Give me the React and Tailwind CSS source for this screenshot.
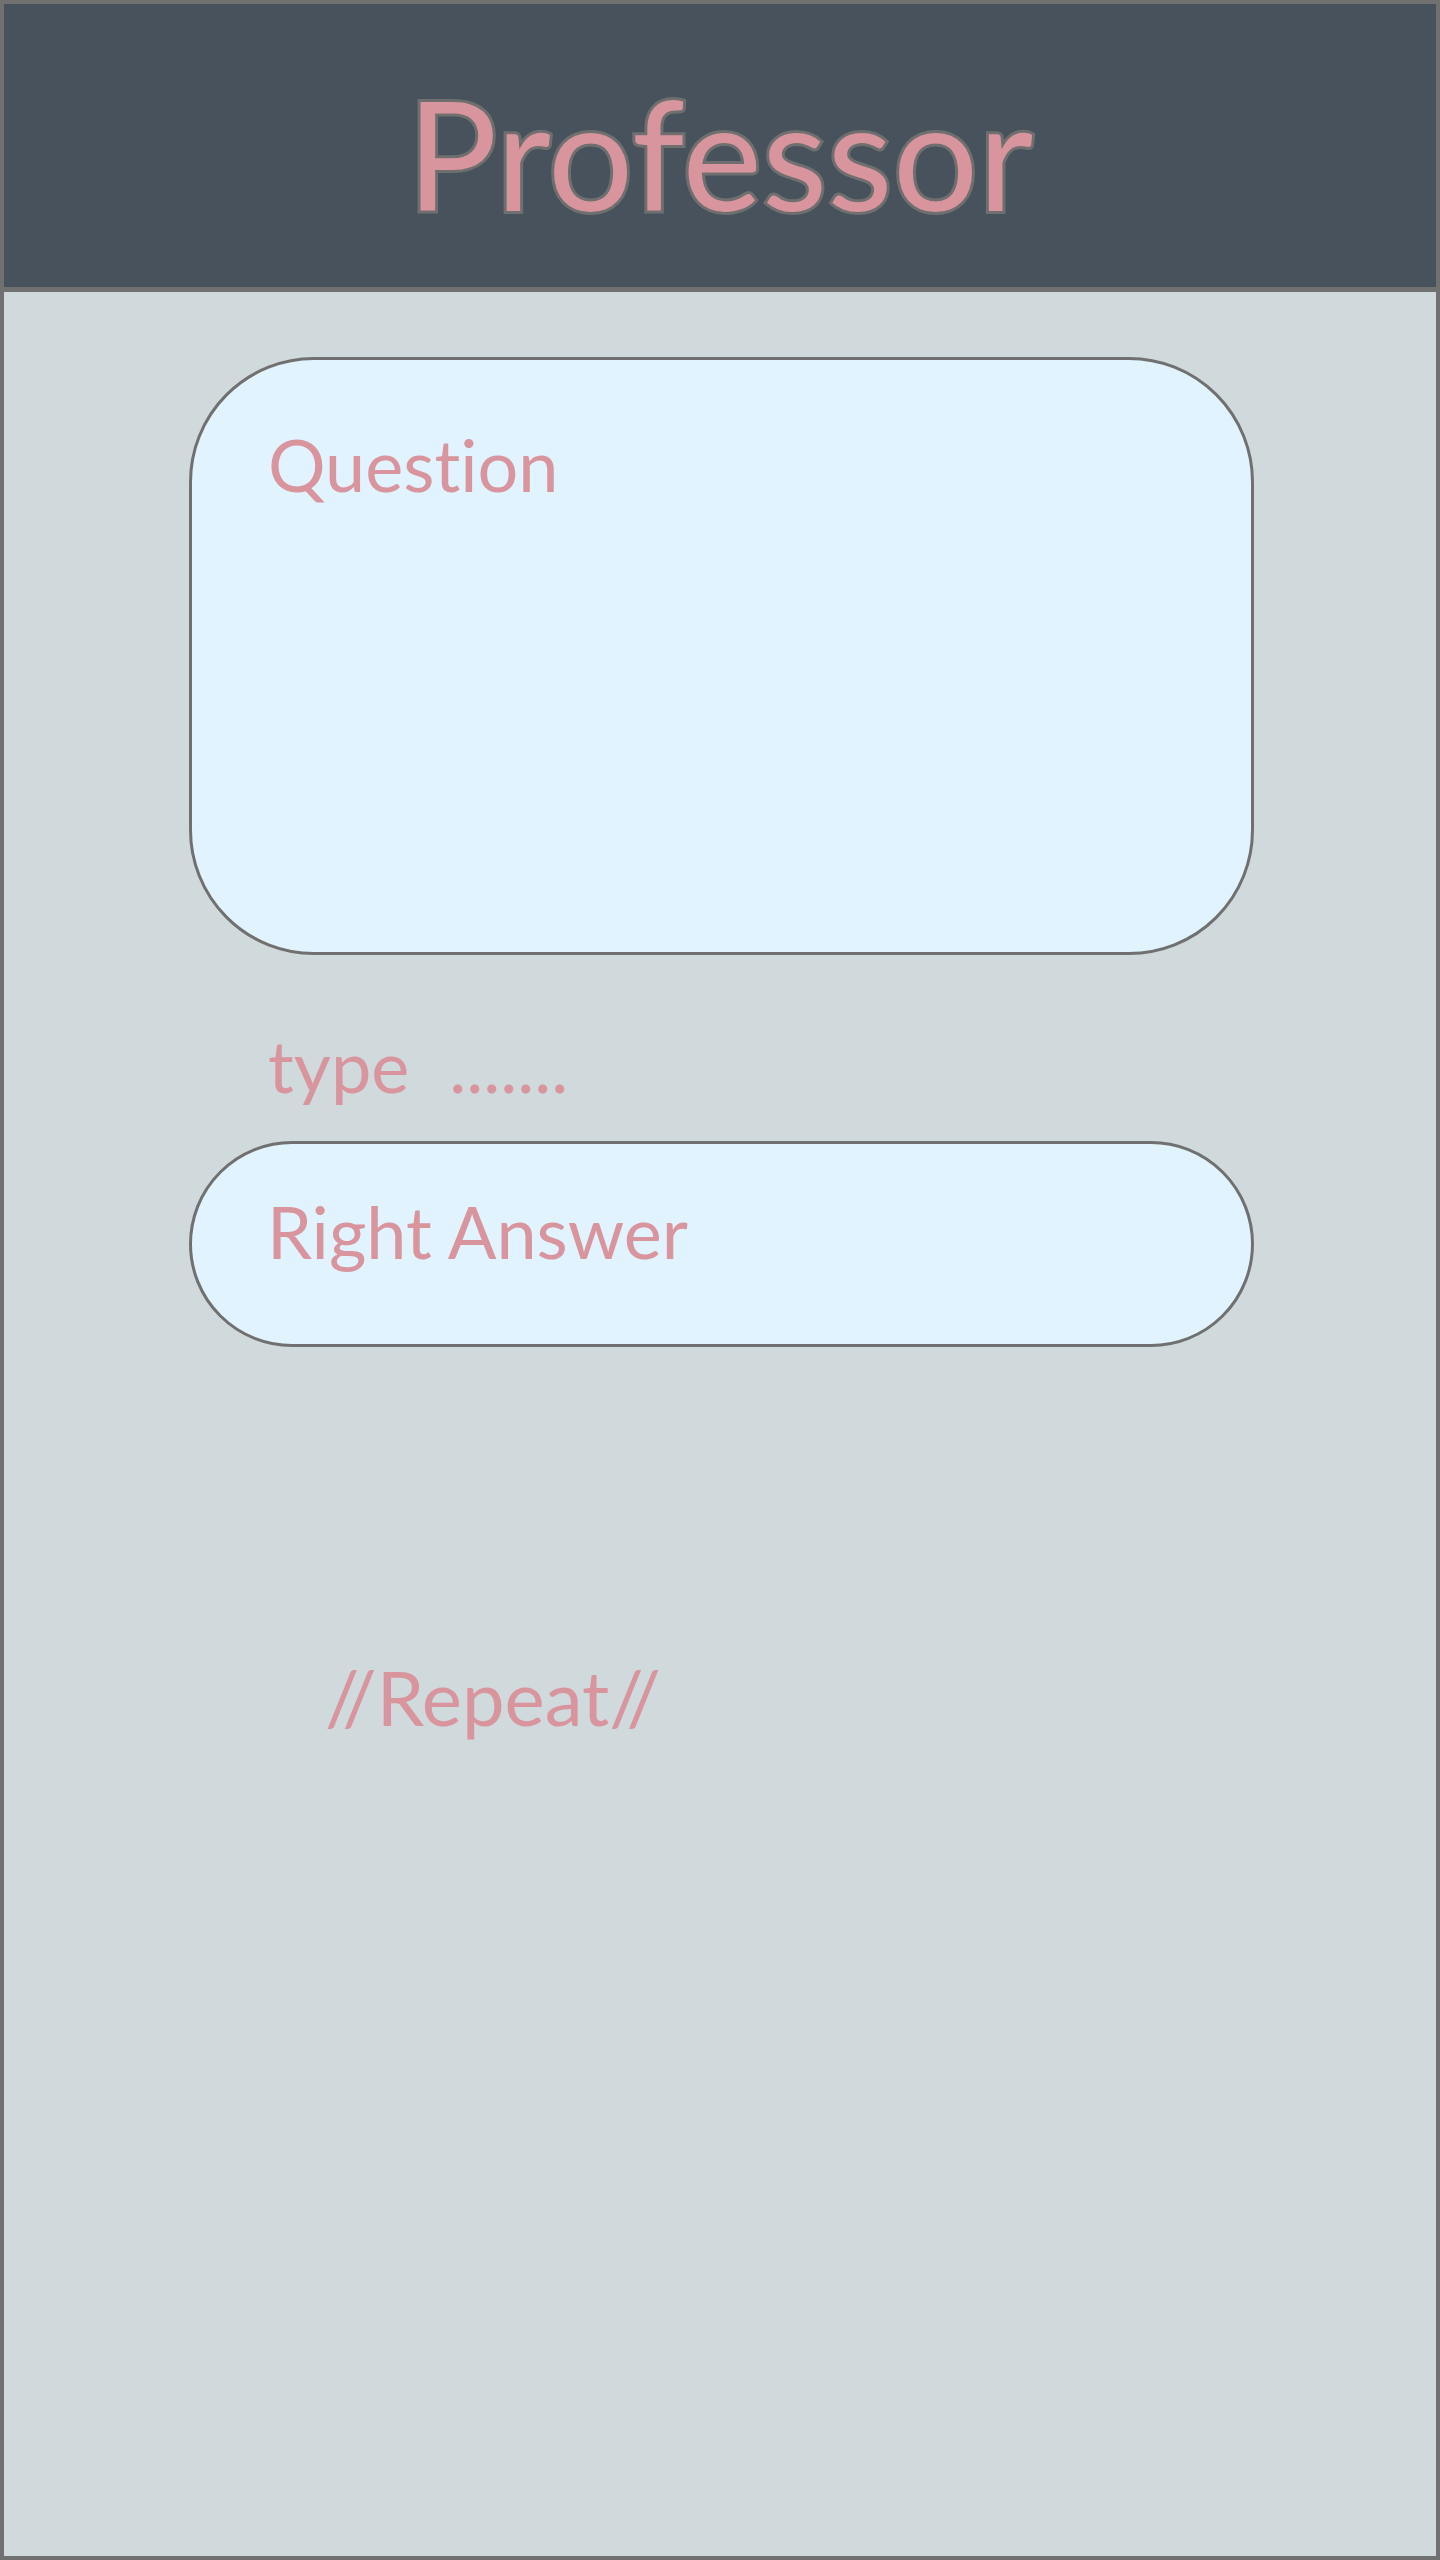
import React from 'react';

const pink = 'text-[#d9959e]';

const App = () => {
    return (
        <div className="w-[1440px] h-[2560px] border-4 border-[#707070] bg-[#d0d9dc] flex flex-col font-['Lato',sans-serif] [font-variant-ligatures:none]">
            {/* Header */}
            <div className="h-[288px] shrink-0 bg-[#48525c] border-b-[5px] border-[#707070] pt-[73px] text-center">
                <h1 className={`text-[151px] leading-none ${pink} [-webkit-text-stroke:6px_#6f6f6f] [paint-order:stroke_fill]`}>
                    Professor
                </h1>
            </div>

            {/* Body */}
            <div className="pl-[185px] pt-[65px] flex flex-col items-start">
                <div className="w-[1065px] h-[598px] rounded-[125px] border-[3px] border-[#707070] bg-[#e1f3fe] pl-[76px] pt-[68px]">
                    <p className={`text-[72px] leading-none ${pink}`}>Question</p>
                </div>

                <p className={`mt-[74px] ml-[79px] text-[72px] leading-none ${pink}`}>
                    type<span className="ml-[40px]">.......</span>
                </p>

                <div className="mt-[40px] w-[1065px] h-[206px] rounded-[103px] border-[3px] border-[#707070] bg-[#e1f3fe] pl-[75px] pt-[51px]">
                    <p className={`text-[72px] leading-none ${pink}`}>Right Answer</p>
                </div>

                <p className={`mt-[312px] ml-[136px] text-[76px] leading-none ${pink}`}>//Repeat//</p>
            </div>
        </div>
    );
};

export default App;
